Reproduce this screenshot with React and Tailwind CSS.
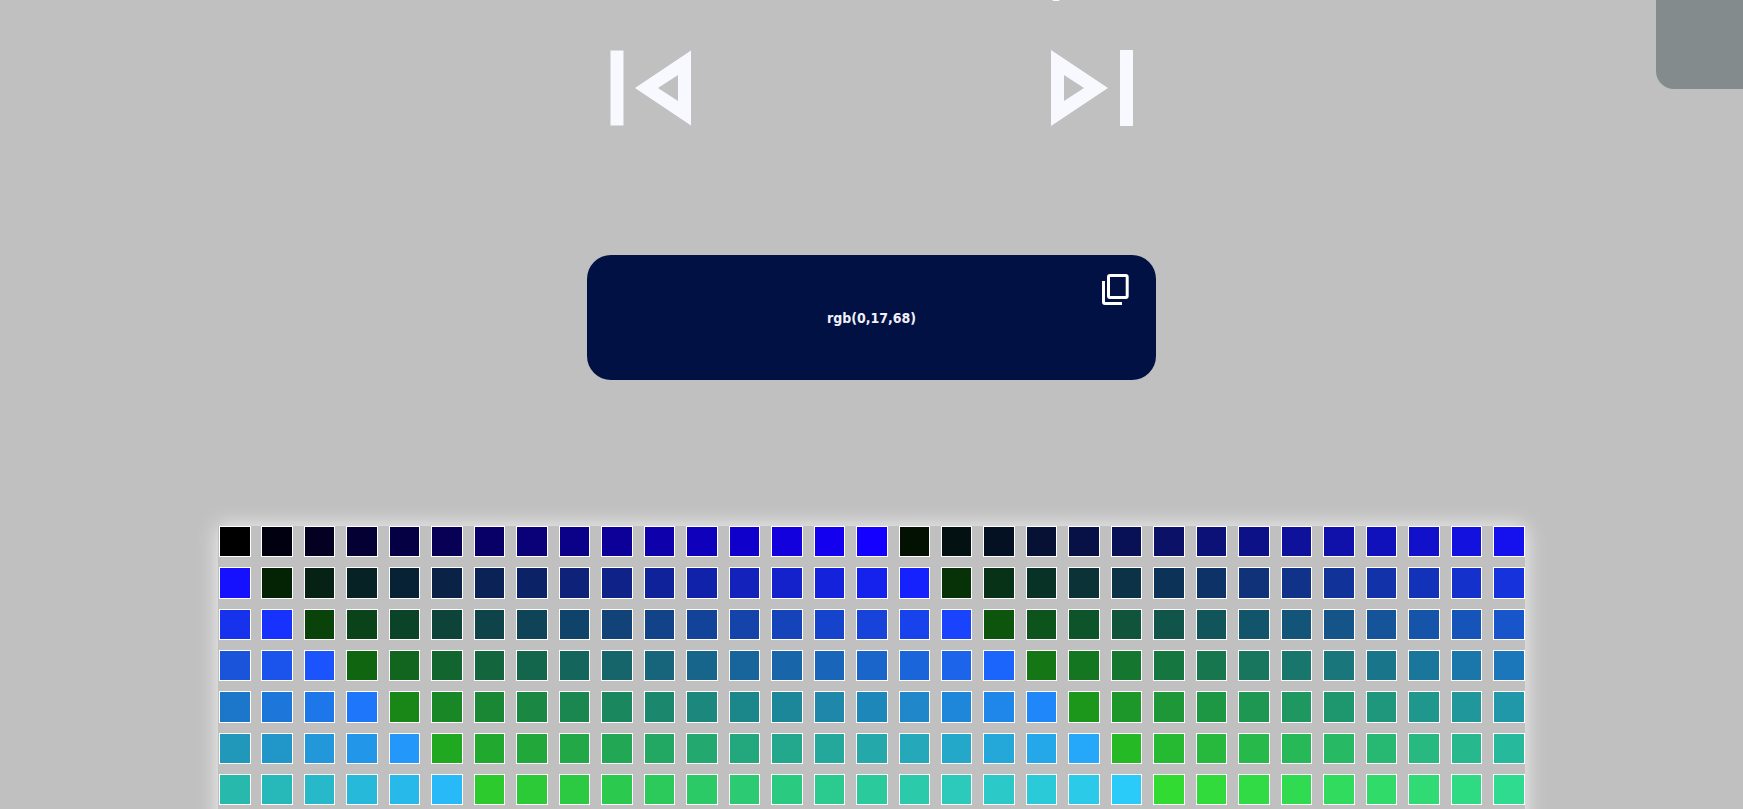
import React from 'react';

// palette is 16 steps of green by 16 steps of blue
const swatches = [];
for (let g = 0; g < 16; g++) {
  for (let b = 0; b < 16; b++) {
    swatches.push({ g: g * 17, b: b * 17 });
  }
}

function swatchColor({ g, b }) {
  const t = b / 255;
  const lift = 0.1 * g + 0.00056 * g * g;
  const red = Math.round(0.08 * b + lift * (1 - t * 0.5));
  const green = Math.round(g * 0.99);
  const blue = Math.round(b + lift * (1 - t) * (1 - t) - 0.03 * g * t);
  return `rgb(${red},${green},${blue})`;
}

function PrevIcon() {
  return (
    <svg width="82" height="76" viewBox="0 0 82 76" className="text-[#f8f8ff]">
      <rect x="0.5" y="0.5" width="13" height="75" fill="currentColor" />
      <path fillRule="evenodd" fill="currentColor" d="M81 0.5V75.5L25 38ZM68 25L48 38L68 51Z" />
    </svg>
  );
}

function NextIcon() {
  return (
    <svg width="82" height="76" viewBox="0 0 82 76" className="text-[#f8f8ff]">
      <rect x="69" y="0" width="13" height="76" fill="currentColor" />
      <path fillRule="evenodd" fill="currentColor" d="M0 0V76L57 38ZM13 25V51L33 38Z" />
    </svg>
  );
}

function CopyIcon() {
  return (
    <svg width="30" height="34" viewBox="0 0 30 34" fill="none" stroke="white" strokeWidth="3" className="absolute top-[18px] right-[26px]">
      <rect x="8.5" y="2.5" width="18.7" height="22" rx="1.5" />
      <path d="M3.5 8V29C3.5 30 4.2 30.5 5 30.5H22" />
    </svg>
  );
}

export default function App() {
  return (
    <div className="relative h-[809px] overflow-hidden bg-[#c0c0c0] flex flex-col items-center font-['DejaVu_Sans_Condensed','DejaVu_Sans',sans-serif]">
      <div className="absolute top-0 right-0 w-[87px] h-[89px] bg-[#838b8d] rounded-bl-[18px]" />
      <div className="absolute top-[-3px] left-[1052px] w-[8px] h-[4px] rounded-full bg-[#f8f8ff]" />

      <div className="mt-[50px] w-[523px] flex justify-between">
        <PrevIcon />
        <NextIcon />
      </div>

      <div className="relative mt-[129px] w-[569px] h-[125px] shrink-0 bg-[#011144] rounded-[24px] flex items-center justify-center">
        <CopyIcon />
        <span className="pt-px text-[14px] font-bold text-[#f0f0f8]">rgb(0,17,68)</span>
      </div>

      <div className="mt-[146px] w-[1307px] shrink-0 grid grid-cols-[repeat(31,31.5px)] justify-between gap-y-[10px] pl-px shadow-[0_0_20px_rgba(255,255,255,0.8)]">
        {swatches.map((s) => (
          <div
            key={`${s.g}-${s.b}`}
            className="h-[31.33px] border border-white"
            style={{ backgroundColor: swatchColor(s) }}
          />
        ))}
      </div>
    </div>
  );
}
